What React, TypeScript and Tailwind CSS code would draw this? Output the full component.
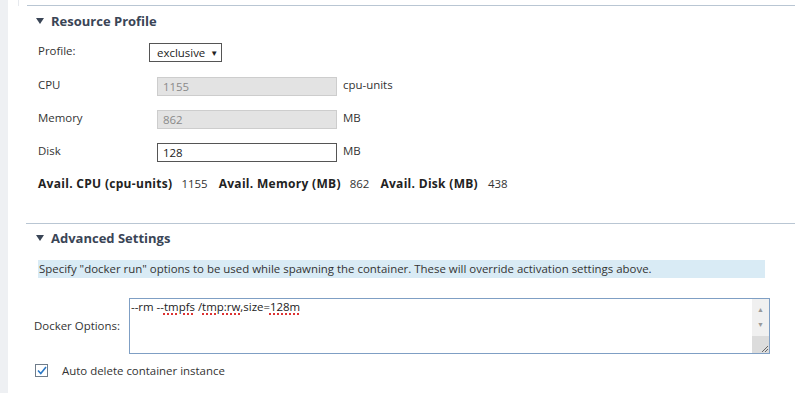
import React from 'react';

const font = "font-['Open_Sans','Liberation_Sans',sans-serif]";

const Caret = () => (
  <svg width="8" height="6" viewBox="0 0 8 6" className="shrink-0">
    <path d="M0 0 L8 0 L4 6 Z" fill="#3a4556" />
  </svg>
);

const SectionTitle: React.FC<{ title: string }> = ({ title }) => (
  <div className="flex items-center gap-[7px] pl-[36px] h-[18px]">
    <Caret />
    <span className="text-[13px] font-bold text-[#3a4556] leading-[18px]">{title}</span>
  </div>
);

interface FieldRowProps {
  label: string;
  value: string;
  unit: string;
  disabled?: boolean;
}

const FieldRow: React.FC<FieldRowProps> = ({ label, value, unit, disabled }) => (
  <div className="flex items-center h-[19px]">
    <span className="w-[157px] pl-[38px] shrink-0 -mt-[3px]">{label}</span>
    <div
      className={
        disabled
          ? 'w-[180px] h-[19px] bg-[#e3e3e3] border border-[#cdcdcd] text-[#8a8a8a] pl-[5px] flex items-center'
          : 'w-[180px] h-[19px] bg-white border border-[#555] text-[#222] pl-[5px] flex items-center'
      }
    >
      {value}
    </div>
    <span className="ml-[6px] -mt-[4px]">{unit}</span>
  </div>
);

const Spell: React.FC<{ children: React.ReactNode }> = ({ children }) => (
  <span className="underline decoration-dotted decoration-[#d33] decoration-[1.5px] underline-offset-[2px]">
    {children}
  </span>
);

const App: React.FC = () => {
  return (
    <div className={`w-[795px] h-[393px] bg-white flex text-[11.45px] text-[#333] overflow-hidden ${font}`}>
      <div className="w-[8px] bg-[#eef0f3] shrink-0" />
      <div className="flex-1 flex flex-col">
        {/* bottom of the previous panel */}
        <div className="h-[6px] ml-[10px] border-l border-[#e6e9ee] flex">
          <div className="flex-1 ml-[8px] border-b border-[#b9c6d3]" />
        </div>

        <div className="-ml-[8px] pt-[6px]">
          <SectionTitle title="Resource Profile" />

          <div className="flex items-center mt-[13px] h-[19px]">
            <span className="w-[149px] pl-[38px] -mt-[3px]">Profile:</span>
            <div className="w-[73px] h-[19px] border border-[#555] pl-[7px] flex items-center gap-[5px] text-[#222]">
              <span>exclusive</span>
              <span className="text-[8px]">▼</span>
            </div>
          </div>

          <div className="flex flex-col gap-[14px] mt-[15px]">
            <FieldRow label="CPU" value="1155" unit="cpu-units" disabled />
            <FieldRow label="Memory" value="862" unit="MB" disabled />
            <FieldRow label="Disk" value="128" unit="MB" />
          </div>

          <div className="flex items-center pl-[38px] mt-[14px] h-[16px]">
            <span className="font-bold text-[12px] tracking-[0.3px] text-[#222]">Avail. CPU (cpu-units)</span>
            <span className="ml-[9px] mr-[11px]">1155</span>
            <span className="font-bold text-[12px] tracking-[0.3px] text-[#222]">Avail. Memory (MB)</span>
            <span className="ml-[9px] mr-[11px]">862</span>
            <span className="font-bold text-[12px] tracking-[0.3px] text-[#222]">Avail. Disk (MB)</span>
            <span className="ml-[10px]">438</span>
          </div>
        </div>

        <div className="ml-[18px] mt-[31px] border-t border-[#b9c6d3]" />

        <div className="-ml-[8px] pt-[5px]">
          <SectionTitle title="Advanced Settings" />

          <div className="ml-[38px] mr-[30px] mt-[13px] h-[18px] bg-[#d9ebf5] pl-[1px] flex items-center">
            Specify "docker run" options to be used while spawning the container. These will override activation settings above.
          </div>

          <div className="flex items-center mt-[20px]">
            <span className="w-[129px] pl-[34px] shrink-0">Docker Options:</span>
            <div className="w-[641px] h-[56px] border border-[#7f9fc4] flex">
              <div className="flex-1 pl-[1px] text-[#222] leading-[16px]">
                --rm --<Spell>tmpfs</Spell> /<Spell>tmp:rw</Spell>,size=<Spell>128m</Spell>
              </div>
              <div className="w-[17px] bg-[#f0f0f0] flex flex-col items-center">
                <span className="text-[7px] text-[#999] mt-[6px]">▲</span>
                <span className="text-[7px] text-[#999] mt-[4px]">▼</span>
                <div className="mt-auto w-full h-[17px] bg-[#dcdcdc] flex items-end justify-end">
                  <svg width="10" height="10" viewBox="0 0 10 10">
                    <path d="M9 3 L3 9 M9 6 L6 9" stroke="#666" strokeWidth="1" />
                  </svg>
                </div>
              </div>
            </div>
          </div>

          <div className="flex items-center mt-[8px] pl-[35px] gap-[14px]">
            <div className="w-[13px] h-[13px] border border-[#6f7c8a] flex items-center justify-center">
              <svg width="10" height="9" viewBox="0 0 10 9">
                <path d="M1 4.5 L3.8 7.5 L9 1" stroke="#2b78c6" strokeWidth="1.6" fill="none" />
              </svg>
            </div>
            <span>Auto delete container instance</span>
          </div>
        </div>
      </div>
    </div>
  );
};

export default App;
